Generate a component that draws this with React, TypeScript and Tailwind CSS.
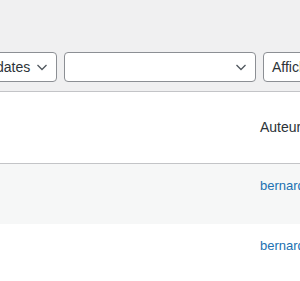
function Chevron() {
  return (
    <svg width="16" height="16" viewBox="0 0 16 16" className="shrink-0 text-[#50575e]">
      <path d="M3.5 6 L8 10.5 L12.5 6" fill="none" stroke="currentColor" strokeWidth="1.3" />
    </svg>
  );
}

function Select({ label, className }: { label: string; className: string }) {
  return (
    <div
      className={`flex h-[30px] shrink-0 items-center justify-between rounded-[4px] border border-[#8c8f94] bg-white pl-2 pr-[6px] text-[14px] text-[#2c3338] ${className}`}
    >
      <span className="whitespace-nowrap">{label}</span>
      <Chevron />
    </div>
  );
}

export default function App() {
  return (
    <div className="h-[281px] w-[300px] overflow-hidden bg-[#f0f0f1] font-['Liberation_Sans',Arial,sans-serif]">
      <div className="ml-[-80px] flex gap-[7px] pt-[52px]">
        <Select label="Toutes les dates" className="w-[137px]" />
        <Select label="" className="w-[192px]" />
        <Select label="Afficher tous les formats" className="w-[200px]" />
      </div>

      <div className="mt-[9px] border-t border-[#c3c4c7] bg-white">
        <div className="flex h-[72px] items-center border-b border-[#c3c4c7]">
          <div className="ml-[260px] whitespace-nowrap text-[14px] text-[#2c3338]">Auteur</div>
        </div>
        <div className="h-[60px] bg-[#f6f7f7] pt-[12px]">
          <div className="ml-[260px] whitespace-nowrap text-[13px] text-[#2271b1]">bernard</div>
        </div>
        <div className="h-[60px] bg-white pt-[12px]">
          <div className="ml-[260px] whitespace-nowrap text-[13px] text-[#2271b1]">bernard</div>
        </div>
      </div>
    </div>
  );
}
